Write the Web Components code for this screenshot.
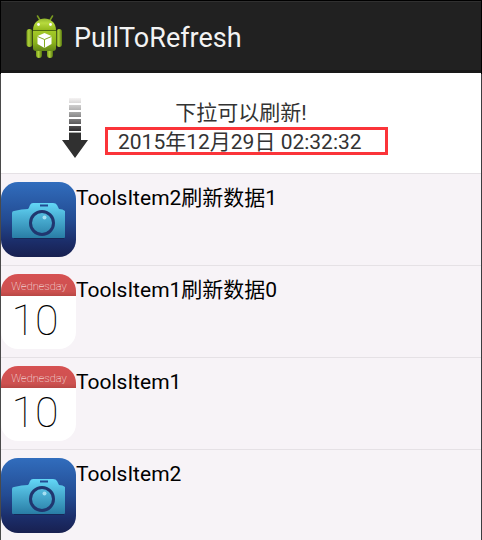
<!DOCTYPE html>
<html lang="zh-CN">
<head>
<meta charset="utf-8">
<meta name="viewport" content="width=device-width, initial-scale=1">
<title>PullToRefresh</title>
<style>
html, body { height: 100%; }
body { margin: 0; overflow: hidden; font-family: Roboto, "Noto Sans CJK SC", sans-serif; font-size: 21px; line-height: 28px; color: #000; }
</style>
</head>
<body>
<pull-app>
  <app-bar slot="bar">PullToRefresh</app-bar>
  <refresh-header datetime="2015-12-29T02:32:32">下拉可以刷新!<span slot="time">2015年12月29日 02:32:32</span></refresh-header>
  <tool-list>
    <tool-item><camera-icon slot="icon"></camera-icon>ToolsItem2刷新数据1</tool-item>
    <tool-item><calendar-icon slot="icon"></calendar-icon>ToolsItem1刷新数据0</tool-item>
    <tool-item><calendar-icon slot="icon"></calendar-icon>ToolsItem1</tool-item>
    <tool-item><camera-icon slot="icon"></camera-icon>ToolsItem2</tool-item>
  </tool-list>
</pull-app>
<script>
const define = (name, html, setup) => customElements.define(name, class extends HTMLElement {
  constructor() {
    super();
    this.attachShadow({ mode: 'open' }).innerHTML = html;
  }
  connectedCallback() { if (setup) setup(this); }
});

define('pull-app', `
<style>
:host { display: flex; flex-direction: column; box-sizing: border-box; min-height: 100%; background: #f7f3f7; border-left: 1px solid #4a4a4a; border-right: 1px solid #3c3c3f; }
main { display: block; }
</style>
<slot name="bar"></slot><main><slot></slot></main>`);

define('app-bar', `
<style>
:host { display: block; }
header { display: flex; align-items: center; gap: 10px; padding: 2px 24px 0; height: 72px; box-sizing: border-box; border-top: 1px solid #303030; border-bottom: 3px solid #181818; background: #212121; outline: 1px solid #000; margin-top: 1px; }
h1 { margin: 0; padding-top: 2px; font-size: 27px; line-height: 36px; font-weight: 400; color: #f3f3f3; }
svg { display: block; flex: none; }
</style>
<header>
<svg width="39" height="44" viewBox="0 0 39 44" aria-hidden="true">
<defs>
<linearGradient id="b" x2="0" y2="1"><stop offset="0" stop-color="#a4c928"/><stop offset=".55" stop-color="#8db51c"/><stop offset="1" stop-color="#648717"/></linearGradient>
<linearGradient id="h" x2="0" y2="1"><stop offset="0" stop-color="#8fb52b"/><stop offset=".4" stop-color="#b7da3d"/><stop offset="1" stop-color="#93b91d"/></linearGradient>
<linearGradient id="l"><stop offset="0" stop-color="#759b18"/><stop offset=".4" stop-color="#b0d23c"/><stop offset="1" stop-color="#55750f"/></linearGradient>
</defs>
<path d="M12.500 1l3 5M27.500 1l-3 5" stroke="#7b9c21" stroke-width="1.500" stroke-linecap="round"/>
<rect x="11" y="32" width="6" height="11" rx="3" fill="url(#l)"/><rect x="22" y="32" width="6" height="11" rx="3" fill="url(#l)"/>
<rect x="1.500" y="14" width="6" height="18" rx="3" fill="url(#l)"/><rect x="31.500" y="14" width="5.500" height="18" rx="2.700" fill="url(#l)"/>
<path d="M8 16h23v17q0 3-3 3H11q-3 0-3-3z" fill="url(#b)"/>
<path d="M8 15C8 -.5 31 -.5 31 15z" fill="url(#h)"/>
<path d="M8 15.500h23" stroke="#4f6c0e"/>
<circle cx="13.500" cy="9.500" r="1.400" fill="#fff"/><circle cx="25.500" cy="9.500" r="1.400" fill="#fff"/>
<path d="M19.500 18l7 3v8l-7 4-7-4v-8z" fill="#fff"/><path d="M12.500 21.500l7 3 7-3M19.500 24.500v8" fill="none" stroke="#84ab20" stroke-width="1"/>
</svg>
<h1><slot></slot></h1>
</header>`);

define('refresh-header', `
<style>
:host { display: block; background: #fff; border-bottom: 1px solid #e5e1e5; color: #333; }
section { display: flex; align-items: flex-start; padding: 25px 24px 14px 59px; }
svg { display: block; flex: none; }
.info { flex: 0 1 283px; margin-left: 17px; display: grid; }
p { margin: 0; padding: 1px 11px 0 0; text-align: center; white-space: nowrap; }
time { display: block; box-sizing: border-box; height: 28px; border: 3px solid #fb3439; padding-left: 10px; line-height: 24px; white-space: nowrap; }
</style>
<section>
<svg width="28" height="61" viewBox="0 0 28 61" aria-hidden="true">
<defs><linearGradient id="g" gradientUnits="userSpaceOnUse" x1="0" y1="0" x2="0" y2="34"><stop offset="0" stop-color="#f5f3f3"/><stop offset=".4" stop-color="#aaa"/><stop offset="1" stop-color="#2a282a"/></linearGradient></defs>
<path fill="url(#g)" d="M9 0h12v5H9zM9 7h12v5H9zM9 14h12v5H9zM9 21h12v5H9zM9 28h12v5H9z"/>
<path d="M9 34.500h12" stroke="#a8aaa8"/>
<path fill="#303030" d="M9 35h12v7h7L15 60 2 42h7z"/>
</svg>
<div class="info"><p><slot></slot></p><time><slot name="time"></slot></time></div>
</section>`, el => {
  el.shadowRoot.querySelector('time').dateTime = el.getAttribute('datetime');
  el.setAttribute('role', 'status');
});

define('tool-list', `
<style>:host { display: block; }</style><slot></slot>`, el => el.setAttribute('role', 'list'));

define('tool-item', `
<style>
:host { display: flex; align-items: flex-start; padding: 8px 0; border-bottom: 1px solid #e5e1e5; }
::slotted([slot=icon]) { flex: none; }
span { flex: 1; padding-top: 2px; }
</style>
<slot name="icon"></slot><span><slot></slot></span>`, el => el.setAttribute('role', 'listitem'));

define('camera-icon', `
<style>:host, svg { display: block; }</style>
<svg width="75" height="75" viewBox="0 0 75 75" aria-hidden="true">
<defs>
<linearGradient id="b" x2="0" y2="1"><stop offset="0" stop-color="#316dbd"/><stop offset=".5" stop-color="#234b92"/><stop offset=".8" stop-color="#1b2d69"/><stop offset="1" stop-color="#182050"/></linearGradient>
<linearGradient id="c" gradientUnits="userSpaceOnUse" x1="0" y1="21" x2="0" y2="56"><stop offset="0" stop-color="#63d7f7"/><stop offset=".35" stop-color="#4eb5d9"/><stop offset="1" stop-color="#297da5"/></linearGradient>
</defs>
<rect width="75" height="75" rx="17" fill="url(#b)"/>
<path d="M13 56.500h50" stroke="#162858"/>
<path fill="url(#c)" d="M13 29q8-2 14-2 1-1 2-4 1-2 3-2h20q3 0 4 2l2 4q4 0 6 2v26q0 1-1 1H12q-1 0-1-1V31q0-2 2-2z"/>
<path d="M39 23.500h8" stroke="#234b92" stroke-width="2"/>
<circle cx="41" cy="41" r="11.500" fill="none" stroke="#20366f" stroke-width="3"/>
<circle cx="43.500" cy="35.500" r="2" fill="#a5dff2"/>
</svg>`);

define('calendar-icon', `
<style>:host, svg { display: block; }</style>
<svg width="75" height="75" viewBox="0 0 75 75" aria-hidden="true">
<defs>
<clipPath id="k"><rect width="75" height="75" rx="17"/></clipPath>
<linearGradient id="r" x2="0" y2="1"><stop offset="0" stop-color="#d65152"/><stop offset=".8" stop-color="#cd5150"/><stop offset="1" stop-color="#b84745"/></linearGradient>
</defs>
<g clip-path="url(#k)"><rect width="75" height="75" fill="#fff"/><rect width="75" height="22" fill="url(#r)"/></g>
<text x="38" y="16" text-anchor="middle" font-family="Roboto, sans-serif" font-weight="100" font-size="11" fill="#fff">Wednesday</text>
<text x="34" y="61" text-anchor="middle" font-family="Roboto, sans-serif" font-weight="100" font-size="43" fill="#000">10</text>
</svg>`);
</script>
</body>
</html>
